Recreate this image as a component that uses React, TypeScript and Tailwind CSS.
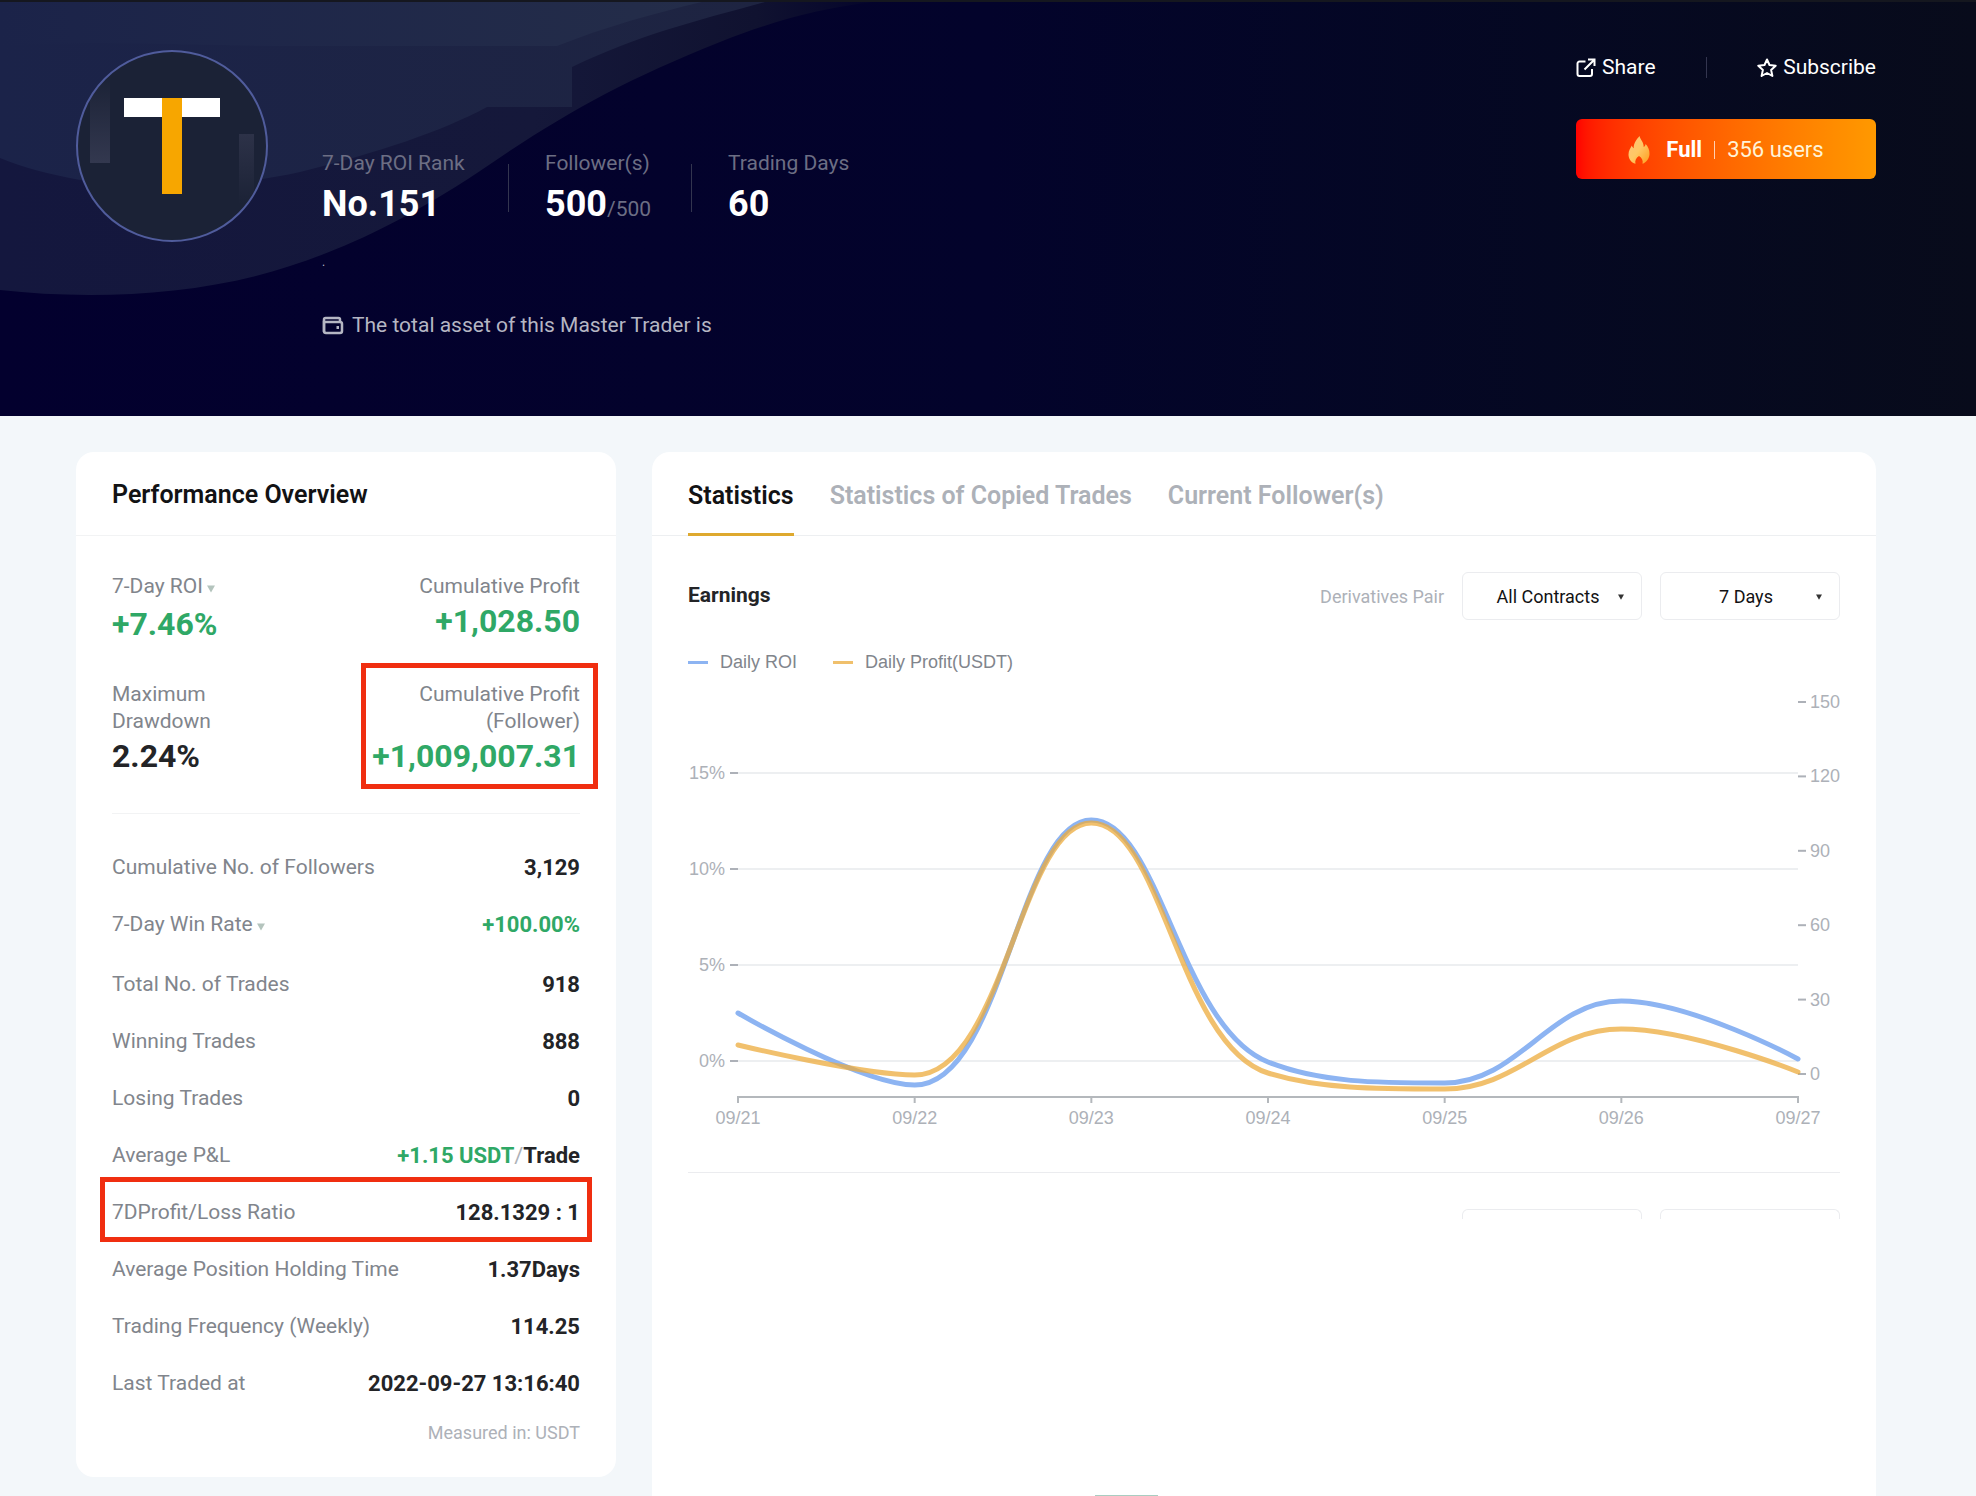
//Interface
interface Row {
  label: string;
  value: string;
  suffix?: string;
  green?: boolean;
  dropdown?: boolean;
  marked?: boolean;
}

interface SelectProps {
  id: string;
  options: string[];
  label?: string;
}

type Point = [number, number];

//Data
const ROWS: Row[] = [
  { label: "Cumulative No. of Followers", value: "3,129" },
  { label: "7-Day Win Rate", value: "+100.00%", green: true, dropdown: true },
  { label: "Total No. of Trades", value: "918" },
  { label: "Winning Trades", value: "888" },
  { label: "Losing Trades", value: "0" },
  { label: "Average P&L", value: "+1.15 USDT", suffix: "Trade", green: true },
  { label: "7DProfit/Loss Ratio", value: "128.1329 : 1", marked: true },
  { label: "Average Position Holding Time", value: "1.37Days" },
  { label: "Trading Frequency (Weekly)", value: "114.25" },
  { label: "Last Traded at", value: "2022-09-27 13:16:40" },
];

const DATES = ["09/21", "09/22", "09/23", "09/24", "09/25", "09/26", "09/27"];
const ROI = [325, 397, 132, 374, 395, 313, 371];
const PROFIT = [357, 387, 135, 385, 401, 341, 384];

//Utils
const xAt = (i: number) => 50 + (i * 1060) / 6;

const clamp = (v: number, a: number, b: number) =>
  Math.max(Math.min(a, b), Math.min(Math.max(a, b), v));

const SMOOTH = 0.4;

// smooth curve whose handles never overshoot the neighbouring points
const smoothPath = (values: number[]) => {
  const pts: Point[] = values.map((y, i) => [xAt(i), y]);
  let d = `M${pts[0][0]} ${pts[0][1]}`;
  let out = pts[0];
  for (let i = 1; i < pts.length; i++) {
    const p = pts[i];
    const prev = pts[i - 1];
    const next = pts[i + 1];
    let inn = p;
    let nextOut = p;
    if (next) {
      const lenPrev = Math.hypot(p[0] - prev[0], p[1] - prev[1]);
      const lenNext = Math.hypot(next[0] - p[0], next[1] - p[1]);
      const r = lenNext / (lenNext + lenPrev);
      const ox = clamp(p[0] + (next[0] - prev[0]) * SMOOTH * r, p[0], next[0]);
      const oy = clamp(p[1] + (next[1] - prev[1]) * SMOOTH * r, p[1], next[1]);
      const ix = clamp(p[0] - ((ox - p[0]) * lenPrev) / lenNext, prev[0], p[0]);
      const iy = clamp(p[1] - ((oy - p[1]) * lenPrev) / lenNext, prev[1], p[1]);
      inn = [ix, iy];
      nextOut = [
        p[0] + ((p[0] - ix) * lenNext) / lenPrev,
        p[1] + ((p[1] - iy) * lenNext) / lenPrev,
      ];
    }
    d += `C${out[0]} ${out[1]} ${inn[0]} ${inn[1]} ${p[0]} ${p[1]}`;
    out = nextOut;
  }
  return d;
};

//Icons
const IconShare = () => (
  <svg width="20" height="20" viewBox="0 0 20 20" fill="none" stroke="currentColor" strokeWidth="2">
    <path d="M9.500 3.500H3.500A2 2 0 0 0 1.500 5.500V16A2 2 0 0 0 3.500 18H14A2 2 0 0 0 16 16V11" />
    <path d="M12 1.500H18.500V8M18 2L8.500 11.500" />
  </svg>
);

const IconStar = () => (
  <svg width="20" height="20" viewBox="0 0 20 20" fill="none" stroke="currentColor" strokeWidth="2" strokeLinejoin="round">
    <path d="M10 1.500L12.500 7L18.700 7.700L14.100 11.900L15.400 18L10 15L4.600 18L5.900 11.900L1.300 7.700L7.500 7Z" />
  </svg>
);

const IconWallet = () => (
  <svg width="22" height="20" viewBox="0 0 22 20" fill="none" stroke="currentColor" strokeWidth="2.500">
    <path d="M2 16V3.500A1.500 1.500 0 0 1 3.500 2H16.500A1.500 1.500 0 0 1 18 3.500V6" />
    <path d="M2 6H18A2 2 0 0 1 20 8V15A2 2 0 0 1 18 17H4A2 2 0 0 1 2 15Z" />
    <path d="M14.500 11.500H17" strokeWidth="3" />
  </svg>
);

const IconFlame = () => (
  <svg width="22" height="28" viewBox="0 0 22 28">
    <defs>
      <linearGradient id="flame" x1="0" y1="0" x2="1" y2="1">
        <stop offset="0" stopColor="#ffc27a" />
        <stop offset="0.500" stopColor="#ffc764" />
        <stop offset="1" stopColor="#ff9d1c" />
      </linearGradient>
    </defs>
    <path
      fill="url(#flame)"
      d="M11.500 0C12.500 4 16 6.500 15.700 11C16.900 10.300 17.400 9.200 17.600 8C20 10.500 21.700 14 21.500 18C21.300 22.500 18.500 26.500 14.500 27.800C15.300 24.500 14 22 11 20C8 22 6.700 24.500 7.500 27.800C3 26.500 .5 22.800 .5 18.500C.5 14.500 2.500 12 3.800 9.500C4.300 10.800 4.800 11.600 5.700 12.200C5.600 7.500 8.200 3.800 11.500 0Z"
    />
  </svg>
);

const Caret = ({ className }: { className: string }) => (
  <svg width="8" height="8" viewBox="0 0 8 8" className={className}>
    <path d="M0 0.500H8L4 7.500Z" fill="currentColor" />
  </svg>
);

const Avatar = () => (
  <svg width="192" height="192" viewBox="0 0 192 192" className="shrink-0">
    <defs>
      <clipPath id="round">
        <circle cx="96" cy="96" r="95" />
      </clipPath>
      <linearGradient id="barUp" x1="0" y1="0" x2="0" y2="1">
        <stop offset="0" stopColor="#1b2236" />
        <stop offset="1" stopColor="#33384f" />
      </linearGradient>
      <linearGradient id="barDown" x1="0" y1="0" x2="0" y2="1">
        <stop offset="0" stopColor="#2d3248" />
        <stop offset="1" stopColor="#1b2236" />
      </linearGradient>
    </defs>
    <g clipPath="url(#round)">
      <rect width="192" height="192" fill="#1b2236" />
      <rect x="14" y="26" width="20" height="87" fill="url(#barUp)" />
      <rect x="163" y="84" width="15" height="70" fill="url(#barDown)" />
    </g>
    <rect x="48" y="48" width="96" height="19" fill="#fff" />
    <rect x="86" y="48" width="20" height="96" fill="#f7a600" />
    <circle cx="96" cy="96" r="95" fill="none" stroke="#505c9c" strokeWidth="2" />
  </svg>
);

const HeaderBackdrop = () => (
  <svg className="absolute left-0 top-0" width="960" height="300" viewBox="0 2 960 300">
    <defs>
      <linearGradient id="outer" x1="0" y1="0" x2="1" y2="0">
        <stop offset="0" stopColor="#14173e" />
        <stop offset="0.600" stopColor="#15183a" />
        <stop offset="0.850" stopColor="#101230" />
        <stop offset="1" stopColor="#03032a" />
      </linearGradient>
      <linearGradient id="inner" x1="0" y1="0" x2="1" y2="0">
        <stop offset="0" stopColor="#1b2349" />
        <stop offset="1" stopColor="#1e2441" />
      </linearGradient>
      <linearGradient id="top" x1="0" y1="0" x2="1" y2="0">
        <stop offset="0" stopColor="#1b2349" />
        <stop offset="1" stopColor="#242d49" />
      </linearGradient>
    </defs>
    <path fill="url(#outer)" d="M0 0H890C830 6 780 18 720 42C620 82 560 116 480 171C400 224 340 250 290 266C200 296 90 300 0 290Z" />
    <path fill="url(#inner)" d="M0 0H772C700 20 640 34 572 67V107H487C440 132 380 152 300 172C190 196 80 190 0 158Z" />
    <path fill="url(#top)" d="M0 0H710C660 12 610 25 557 46H300C200 46 100 40 0 46Z" />
  </svg>
);

const Header = () => {
  return (
    <header className="relative border-t-2 border-[#15171f] bg-linear-to-r from-[#03002e] via-[#03032b] to-[#080b1b] pt-12 pb-[77px] pl-[76px] pr-[100px] text-[21px] leading-[27px]">
      <HeaderBackdrop />
      <div className="relative flex items-start">
        <Avatar />
        <div className="ml-[54px] pt-[100px]">
          <div className="flex gap-9">
            <div className="min-w-[150px]">
              <p className="text-[#6c6e84]">7-Day ROI Rank</p>
              <p className="mt-1.5 text-[36px] leading-[42px] font-bold text-white">No.151</p>
            </div>
            <div className="mt-3.5 h-12 w-px bg-[#33354f]" />
            <div className="min-w-[110px]">
              <p className="text-[#6c6e84]">Follower(s)</p>
              <p className="mt-1.5 flex items-baseline text-[#6c6e84]">
                <span className="text-[36px] leading-[42px] font-bold text-white">500</span>/500
              </p>
            </div>
            <div className="mt-3.5 h-12 w-px bg-[#33354f]" />
            <div>
              <p className="text-[#6c6e84]">Trading Days</p>
              <p className="mt-1.5 text-[36px] leading-[42px] font-bold text-white">60</p>
            </div>
          </div>
          <p className="mt-6 text-xs leading-[27px] text-[#b5b6c3]">.</p>
          <p className="mt-9 flex items-center gap-2 text-[#b5b6c3]">
            <IconWallet />
            The total asset of this Master Trader is
          </p>
        </div>
        <div className="ml-auto w-[300px] pt-1 text-white">
          <div className="flex items-center justify-between">
            <button className="flex items-center gap-1.5">
              <IconShare />
              Share
            </button>
            <div className="h-[21px] w-px bg-[#33354f]" />
            <button className="flex items-center gap-1.5">
              <IconStar />
              Subscribe
            </button>
          </div>
          <button className="mt-[38px] flex h-[60px] w-full items-center justify-center rounded-md bg-linear-to-r from-[#ff0000] to-[#ff9900] pt-px text-[22px]">
            <IconFlame />
            <span className="ml-4 font-bold">Full</span>
            <span className="mx-3 h-[18px] w-px bg-white/70" />
            <span className="text-[#fff3d8]">356 users</span>
          </button>
        </div>
      </div>
    </header>
  );
};

const PerformanceCard = () => {
  return (
    <section className="w-[540px] shrink-0 self-start rounded-[18px] bg-white pb-8 text-[21px] leading-[27px] text-[#81858c]">
      <h2 className="border-b border-[#f2f3f4] px-9 pt-[29px] pb-[27px] text-[25px] font-semibold text-[#121214]">
        Performance Overview
      </h2>
      <div className="px-9 pt-[37px]">
        <div className="grid grid-cols-2 gap-y-9 border-b border-[#f2f3f4] pb-9">
          <div>
            <button className="flex h-[30px] items-start gap-1">
              7-Day ROI
              <Caret className="mt-3 text-[#b4c4bd]" />
            </button>
            <p className="text-[32px] leading-[42px] font-bold text-[#2fa866]">+7.46%</p>
          </div>
          <div className="text-right">
            <p>Cumulative Profit</p>
            <p className="text-[32px] leading-[42px] font-bold text-[#2fa866]">+1,028.50</p>
          </div>
          <div>
            <p className="w-[120px]">Maximum Drawdown</p>
            <p className="text-[32px] leading-[42px] font-bold text-[#232427]">2.24%</p>
          </div>
          <div className="relative text-right">
            <p className="ml-auto w-[180px]">Cumulative Profit (Follower)</p>
            <p className="text-[32px] leading-[42px] font-bold text-[#2fa866]">+1,009,007.31</p>
            <div className="absolute -top-[18px] -right-[18px] -bottom-3 w-[237px] border-5 border-[#f02e10]" />
          </div>
        </div>
        <dl className="flex flex-col gap-[30px] pt-10">
          {ROWS.map((row) => (
            <div key={row.label} className="relative flex justify-between">
              <dt>
                {row.dropdown ? (
                  <button className="flex h-[30px] items-start gap-1">
                    {row.label}
                    <Caret className="mt-3 text-[#b4c4bd]" />
                  </button>
                ) : (
                  row.label
                )}
              </dt>
              <dd className={row.green ? "text-[22px] font-bold text-[#2fa866]" : "text-[22px] font-bold text-[#232427]"}>
                {row.value}
                {row.suffix && (
                  <>
                    <span className="font-normal text-[#adb1b8]">/</span>
                    <span className="text-[#232427]">{row.suffix}</span>
                  </>
                )}
              </dd>
              {row.marked && (
                <div className="absolute -inset-x-3 -top-[22px] -bottom-4 border-5 border-[#f02e10]" />
              )}
            </div>
          ))}
        </dl>
        <p className="mt-6 text-right text-[18px] leading-[24px] text-[#adb1b8]">Measured in: USDT</p>
      </div>
    </section>
  );
};

const Select = ({ id, options, label }: SelectProps) => {
  return (
    <div className="relative">
      <select
        id={id}
        aria-label={label}
        className="h-12 w-[180px] appearance-none rounded-md border border-[#ebecef] bg-white pr-2 text-center text-[18px] text-[#121214]"
      >
        {options.map((option) => (
          <option key={option}>{option}</option>
        ))}
      </select>
      <svg width="6" height="6" viewBox="0 0 8 8" className="pointer-events-none absolute top-[22px] right-[18px]">
        <path d="M0 0.500H8L4 7.500Z" fill="#333" />
      </svg>
    </div>
  );
};

const EarningsChart = () => {
  return (
    <svg viewBox="0 0 1152 448" className="block h-auto w-full font-['Liberation_Sans'] text-[18px]">
      {["15%", "10%", "5%", "0%"].map((label, i) => (
        <g key={label}>
          <line x1="50" x2="1110" y1={85 + i * 96} y2={85 + i * 96} stroke="#edeff1" strokeWidth="2" />
          <line x1="42" x2="50" y1={85 + i * 96} y2={85 + i * 96} stroke="#adb1b8" strokeWidth="2" />
          <text x="37" y={91 + i * 96} textAnchor="end" fill="#adb1b8">
            {label}
          </text>
        </g>
      ))}
      {[150, 120, 90, 60, 30, 0].map((label, i) => (
        <g key={label}>
          <line x1="1110" x2="1118" y1={14 + i * 74.4} y2={14 + i * 74.4} stroke="#adb1b8" strokeWidth="2" />
          <text x="1122" y={20 + i * 74.4} fill="#adb1b8">
            {label}
          </text>
        </g>
      ))}
      <line x1="49" x2="1111" y1="409" y2="409" stroke="#b4b8bc" strokeWidth="2" />
      {DATES.map((date, i) => (
        <g key={date}>
          <line x1={xAt(i)} x2={xAt(i)} y1="409" y2="415" stroke="#b4b8bc" strokeWidth="2" />
          <text x={xAt(i)} y="436" textAnchor="middle" fill="#adb1b8">
            {date}
          </text>
        </g>
      ))}
      <path d={smoothPath(ROI)} fill="none" stroke="#8db4f2" strokeWidth="5" strokeLinecap="round" />
      <path d={smoothPath(PROFIT)} fill="none" stroke="#ecab3c" strokeOpacity="0.75" strokeWidth="5" strokeLinecap="round" />
    </svg>
  );
};

const StatisticsCard = () => {
  return (
    <section className="flex min-w-0 flex-1 flex-col rounded-t-[18px] bg-white">
      <nav className="flex gap-9 border-b border-[#edeff1] px-9 text-[25px] leading-[27px] font-semibold text-[#adb1b8]">
        <button className="-mb-px border-b-3 border-[#dea92f] pt-[30px] pb-6 text-[#121214]">Statistics</button>
        <button className="pt-[30px] pb-[26px]">Statistics of Copied Trades</button>
        <button className="pt-[30px] pb-[26px]">Current Follower(s)</button>
      </nav>
      <div className="flex flex-1 flex-col px-9 pt-9">
        <div className="flex items-center">
          <h3 className="mr-auto text-[21px] font-bold text-[#232427]">Earnings</h3>
          <label htmlFor="pair" className="mr-[18px] text-[18px] text-[#adb1b8]">
            Derivatives Pair
          </label>
          <div className="flex gap-[18px]">
            <Select id="pair" options={["All Contracts"]} />
            <Select id="period" label="Period" options={["7 Days"]} />
          </div>
        </div>
        <div className="mt-[30px] mb-[14px] flex gap-9 font-['Liberation_Sans'] text-[18px] leading-[24px] text-[#81858c]">
          <span className="flex items-center gap-3">
            <i className="h-[3px] w-5 bg-[#8db4f2]" />
            Daily ROI
          </span>
          <span className="flex items-center gap-3">
            <i className="h-[3px] w-5 bg-[#f0c06c]" />
            Daily Profit(USDT)
          </span>
        </div>
        <EarningsChart />
        <hr className="mt-9 border-[#ebecef]" />
        <div className="mt-9 flex justify-end gap-[18px]">
          <div className="h-[10px] w-[180px] rounded-t-md border-x border-t border-[#ebecef]" />
          <div className="h-[10px] w-[180px] rounded-t-md border-x border-t border-[#ebecef]" />
        </div>
        <div className="mt-auto ml-[407px] h-px w-[63px] bg-[#a9cdc1]" />
      </div>
    </section>
  );
};

const App = () => {
  return (
    <div className="flex min-h-screen flex-col bg-[#f3f7fa] font-[Roboto,sans-serif]">
      <Header />
      <main className="flex flex-1 gap-9 pt-9 pl-[76px] pr-[100px]">
        <PerformanceCard />
        <StatisticsCard />
      </main>
    </div>
  );
};

export default App;
